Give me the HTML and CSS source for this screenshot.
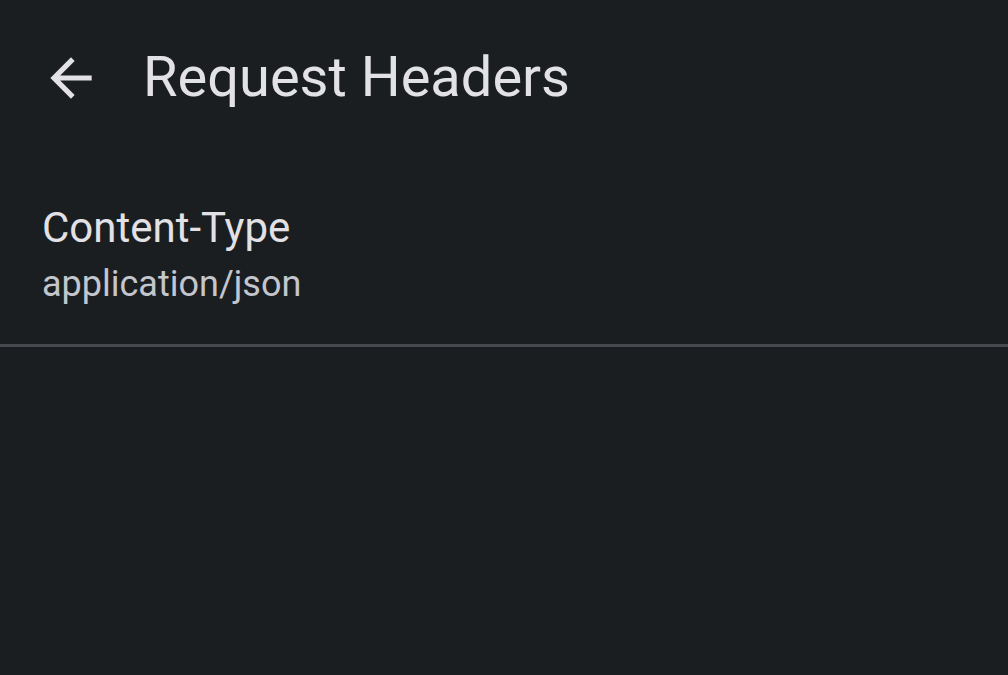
FILE: index.html
```html
<!DOCTYPE html>
<html lang="en">
<head>
    <meta charset="UTF-8">
    <meta name="viewport" content="width=device-width, initial-scale=1.0">
    <title>Request Headers</title>
    <link rel="stylesheet" href="styles.css">
</head>
<body>
    <header class="top-bar">
        <button type="button" class="back-button" aria-label="Back">
            <svg viewBox="0 0 24 24" width="62" height="62">
                <path d="M20 11H7.83l5.59-5.59L12 4l-8 8 8 8 1.41-1.41L7.83 13H20v-2z" fill="currentColor"/>
            </svg>
        </button>
        <h1 class="title">Request Headers</h1>
    </header>

    <ul class="header-list">
        <li class="header-item">
            <div class="header-name">Content-Type</div>
            <div class="header-value">application/json</div>
        </li>
    </ul>
</body>
</html>
```

FILE: styles.css
```css
html, body {
    margin: 0;
    height: 100%;
}

body {
    background-color: #1b1e21;
    color: #e2e2e6;
    font-family: Roboto, "Noto Sans", sans-serif;
}

/* Top app bar */
.top-bar {
    display: flex;
    align-items: center;
    height: 156px;
    padding-left: 40px;
    box-sizing: border-box;
}

.back-button {
    display: flex;
    align-items: center;
    justify-content: center;
    width: 62px;
    height: 62px;
    padding: 0;
    border: none;
    background: none;
    color: #e2e2e6;
}

.title {
    margin: 0 0 2px 41px;
    font-size: 56px;
    font-weight: 400;
    line-height: 1;
}

/* List of headers */
.header-list {
    list-style: none;
    margin: 0;
    padding: 0;
}

.header-item {
    padding: 44px 42px 35px;
    border-bottom: 3px solid #46494d;
}

.header-name {
    font-size: 42px;
    line-height: 56px;
    color: #e2e2e6;
}

.header-value {
    margin-top: 4px;
    font-size: 36px;
    line-height: 49px;
    color: #c3c6cc;
}
```
